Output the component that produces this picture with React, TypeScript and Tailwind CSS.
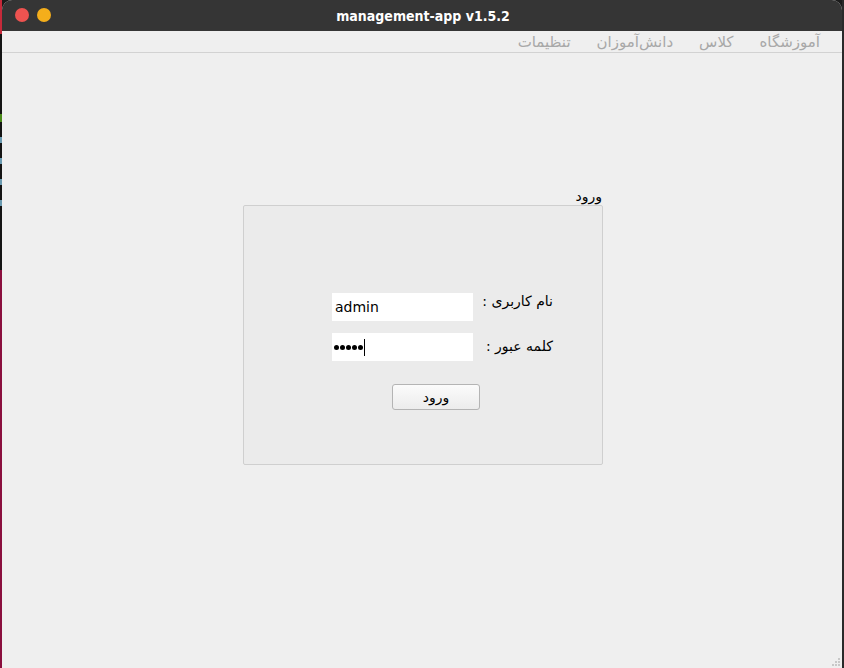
import React from "react";

export default function App() {
  const fa = { fontFamily: '"DejaVu Sans", "Noto Sans", sans-serif' };
  return (
    <div className="w-[844px] h-[668px] flex bg-[#1b1b1b] overflow-hidden">
      {/* left desktop strip */}
      <div className="w-[2px] h-full flex flex-col">
        <div className="h-[34px] bg-[#c62a3a]" />
        <div className="h-[236px] bg-[#141414] flex flex-col gap-[15px] pt-[80px]">
          <div className="h-[8px] bg-[#4a8a1a]" />
          <div className="h-[6px] bg-[#6a9ab0]" />
          <div className="h-[6px] bg-[#6a9ab0]" />
          <div className="h-[6px] bg-[#6a9ab0]" />
          <div className="h-[6px] bg-[#6a9ab0]" />
        </div>
        <div className="flex-1 bg-[#8a0f3e]" />
      </div>
      {/* window */}
      <div className="flex-1 flex flex-col rounded-t-[10px] overflow-hidden bg-[#efefef]">
        <div className="h-[31px] shrink-0 bg-[#353535] relative flex items-center justify-center">
          <div className="absolute left-[13px] top-[8px] flex gap-[8px]">
            <div className="w-[14px] h-[14px] rounded-full bg-[#ee5350]" />
            <div className="w-[14px] h-[14px] rounded-full bg-[#f4ae1b]" />
          </div>
          <span
            className="text-white font-bold text-[14px] leading-none pl-[2px]"
            style={{ fontFamily: '"DejaVu Sans Condensed", "DejaVu Sans", sans-serif' }}
          >
            management-app v1.5.2
          </span>
        </div>
        <div
          dir="rtl"
          className="h-[22px] shrink-0 border-b border-[#d2d2d2] flex items-center gap-[26px] pr-[22px] pt-[1px] text-[15px] text-[#a8a8a8]"
          style={fa}
        >
          <span>آموزشگاه</span>
          <span>کلاس</span>
          <span>دانش‌آموزان</span>
          <span>تنظیمات</span>
        </div>
        <div className="flex-1 relative">
          <div className="flex justify-center pl-[2px] mt-[134px]">
            <div className="w-[360px]">
              <div dir="rtl" className="text-[14px] text-black leading-[18px] pr-[1px]" style={fa}>
                ورود
              </div>
              <div className="h-[260px] border border-[#cfcfcf] rounded-[2px] bg-[#ebebeb] pt-[87px] pl-[88px]">
                <div className="flex items-center h-[28px]">
                  <div
                    className="w-[141px] h-[28px] bg-white flex items-center pl-[3px] text-[14px] text-black"
                    style={{ fontFamily: '"DejaVu Sans", sans-serif' }}
                  >
                    admin
                  </div>
                  <div dir="rtl" className="w-[80px] text-right text-[14px] text-black -mt-[12px]" style={fa}>
                    نام کاربری :
                  </div>
                </div>
                <div className="flex items-center h-[28px] mt-[12px]">
                  <div className="w-[141px] h-[28px] bg-white flex items-center pl-[2px] text-black">
                    <div className="flex gap-[1px]">
                      <span className="w-[5px] h-[5px] rounded-full bg-black" />
                      <span className="w-[5px] h-[5px] rounded-full bg-black" />
                      <span className="w-[5px] h-[5px] rounded-full bg-black" />
                      <span className="w-[5px] h-[5px] rounded-full bg-black" />
                      <span className="w-[5px] h-[5px] rounded-full bg-black" />
                    </div>
                    <span className="w-[1px] h-[17px] bg-black ml-[1px]" />
                  </div>
                  <div dir="rtl" className="w-[80px] text-right text-[14px] text-black -mt-[2px]" style={fa}>
                    کلمه عبور :
                  </div>
                </div>
                <div className="pl-[60px] mt-[23px]">
                  <div
                    className="w-[88px] h-[26px] border border-[#b4b4b4] rounded-[3px] bg-gradient-to-b from-[#fbfbfb] to-[#ececec] flex items-center justify-center text-[14px] text-black"
                    style={fa}
                  >
                    ورود
                  </div>
                </div>
              </div>
            </div>
          </div>
          <div className="absolute right-[2px] bottom-[2px] grid grid-cols-3 gap-[1px]">
            <div className="w-[2px] h-[2px]" />
            <div className="w-[2px] h-[2px]" />
            <div className="w-[2px] h-[2px] bg-[#c8c8c8]" />
            <div className="w-[2px] h-[2px]" />
            <div className="w-[2px] h-[2px] bg-[#c8c8c8]" />
            <div className="w-[2px] h-[2px] bg-[#c8c8c8]" />
            <div className="w-[2px] h-[2px] bg-[#c8c8c8]" />
            <div className="w-[2px] h-[2px] bg-[#c8c8c8]" />
            <div className="w-[2px] h-[2px] bg-[#c8c8c8]" />
          </div>
        </div>
      </div>
      <div className="w-[2px] h-full bg-[#2a2a2a]" />
    </div>
  );
}
